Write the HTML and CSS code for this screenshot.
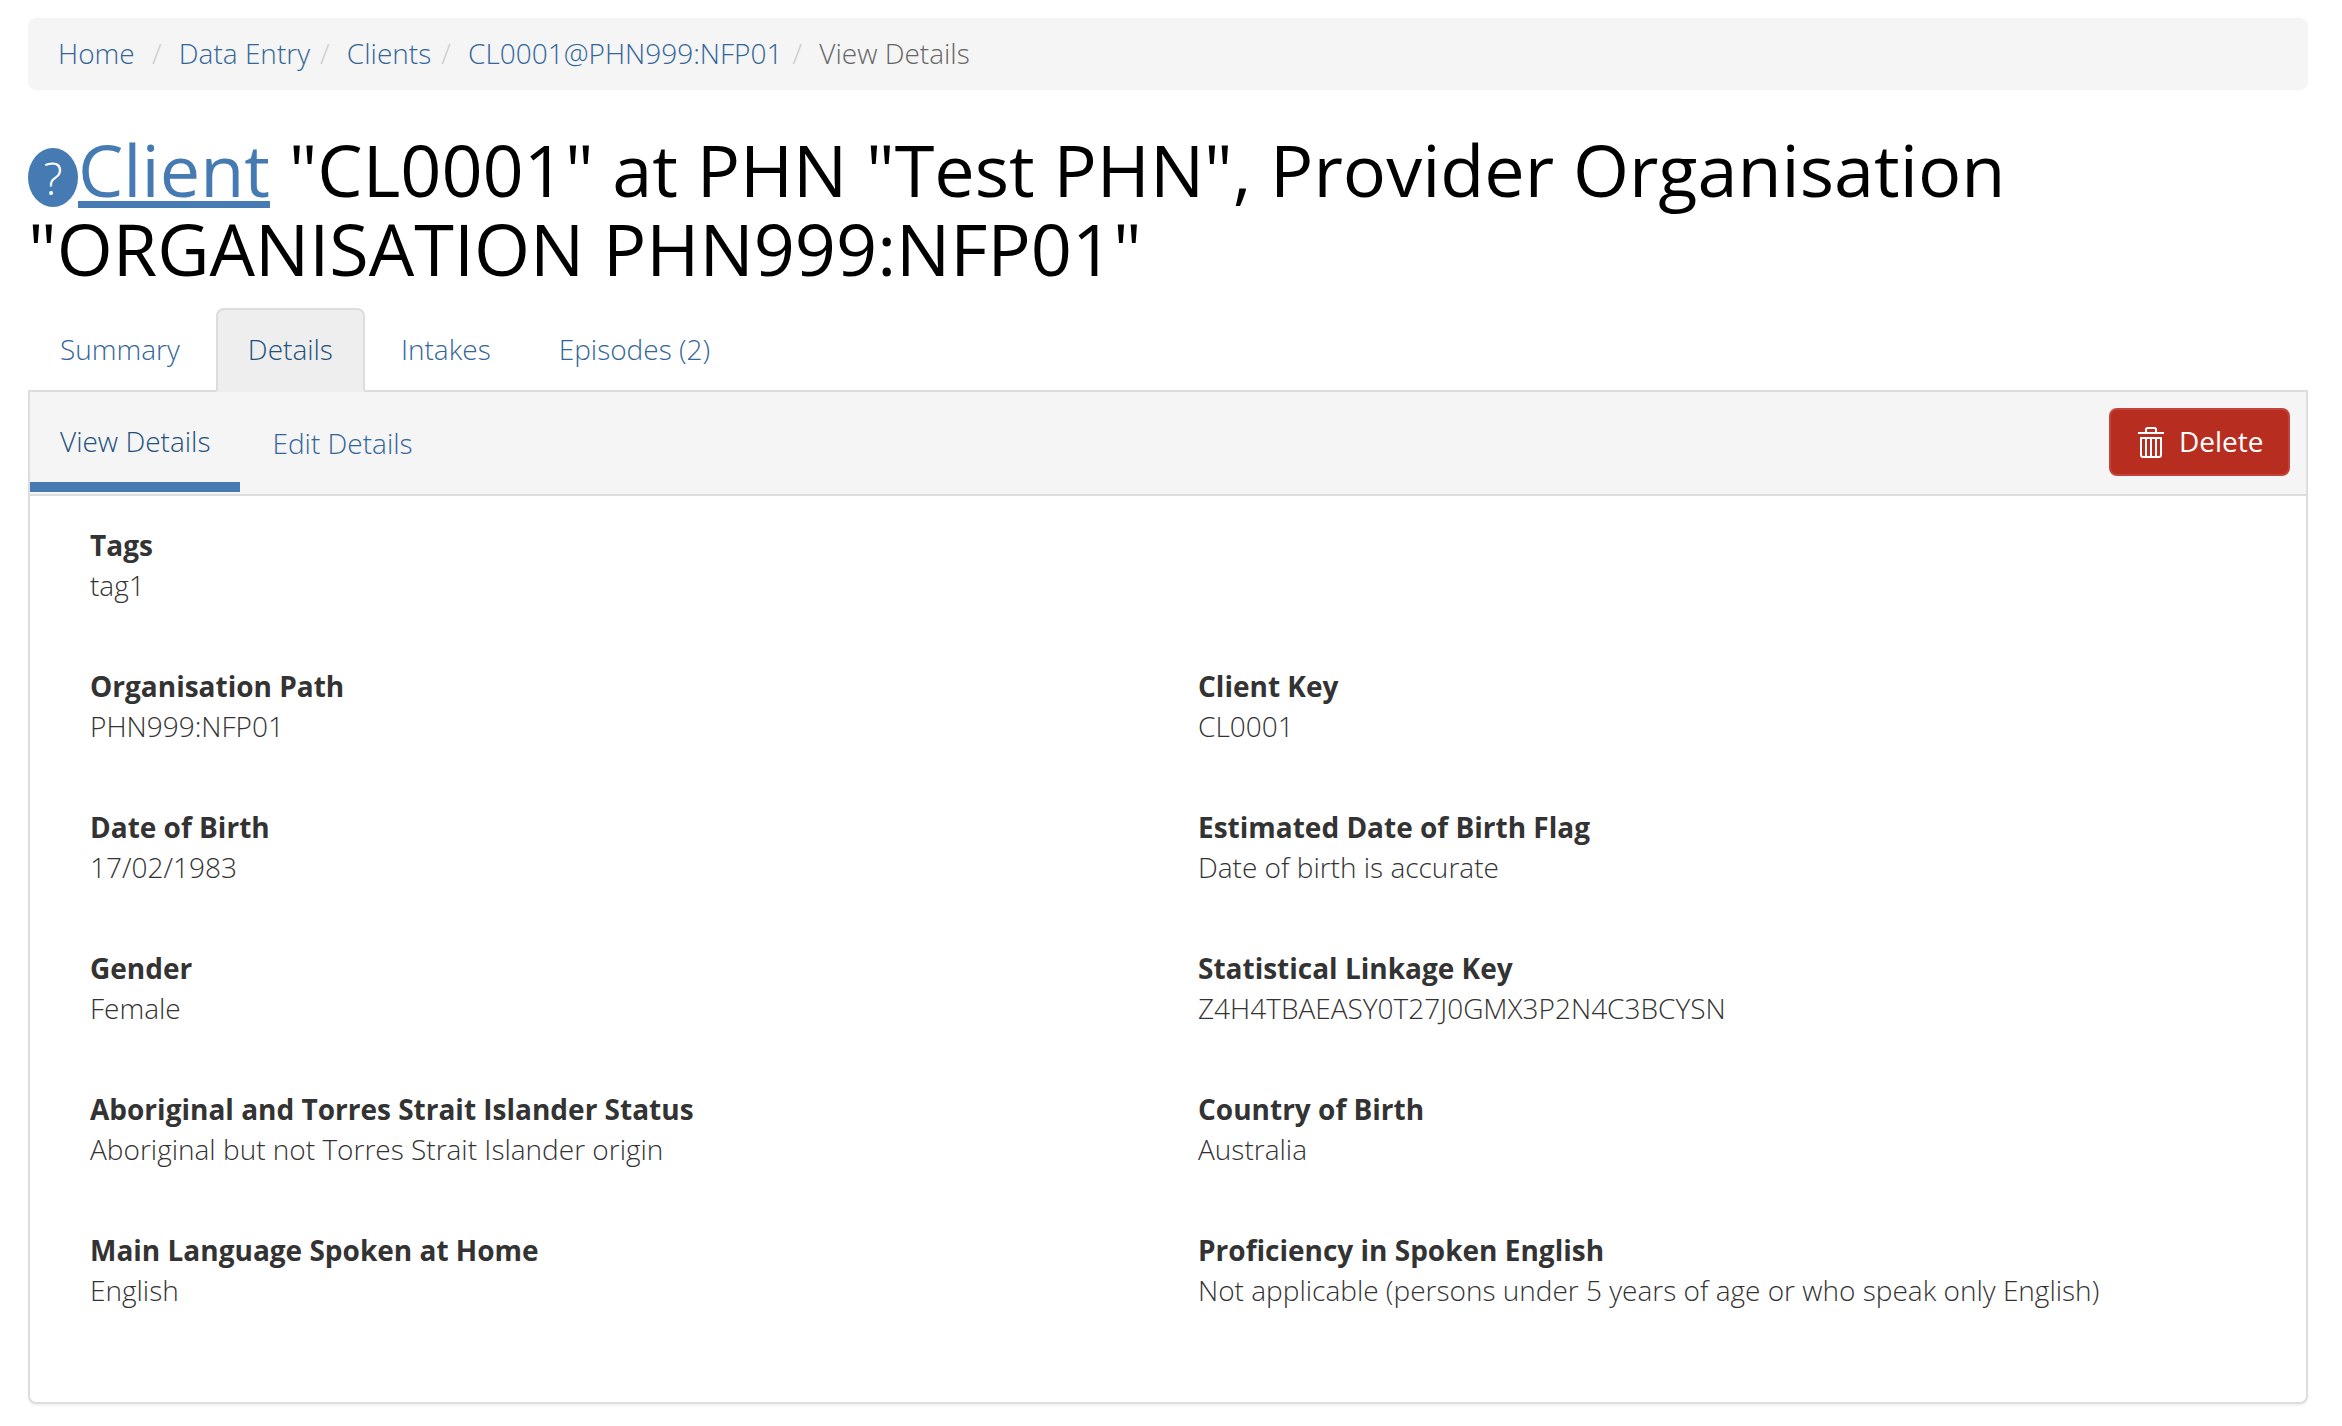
FILE: index.html
```html
<!DOCTYPE html>
<html lang="en">
<head>
<meta charset="utf-8">
<title>View Details</title>
<link rel="stylesheet" href="styles.css">
</head>
<body>
<ol class="breadcrumb">
  <li class="first"><a href="#">Home</a></li>
  <li><a href="#">Data Entry</a></li>
  <li><a href="#">Clients</a></li>
  <li><a href="#">CL0001@PHN999:NFP01</a></li>
  <li>View Details</li>
</ol>
<h1><span class="help">?</span><a href="#">Client</a> "CL0001" at PHN "Test PHN", Provider Organisation "ORGANISATION PHN999:NFP01"</h1>
<nav class="tabs">
  <a href="#">Summary</a>
  <a href="#" class="active">Details</a>
  <a href="#">Intakes</a>
  <a href="#">Episodes (2)</a>
</nav>
<main class="panel">
  <div class="panel-bar">
    <nav class="pills">
      <a href="#" class="active">View Details</a>
      <a href="#">Edit Details</a>
    </nav>
    <button class="delete" type="button">
      <svg class="trash" width="26" height="31" viewBox="0 0 26 31" fill="none" stroke="#fff" stroke-width="2">
        <path d="M0 6H26M8 5V2.500Q8 1 9.500 1H16.500Q18 1 18 2.500V5M3 11H23V28Q23 30 21 30H5Q3 30 3 28Z"/>
        <path d="M8 12V29M13 12V29M18 12V29"/>
      </svg>
      <span>Delete</span>
    </button>
  </div>
  <dl class="fields">
    <div class="wide"><dt>Tags</dt><dd>tag1</dd></div>
    <div><dt>Organisation Path</dt><dd>PHN999:NFP01</dd></div>
    <div><dt>Client Key</dt><dd>CL0001</dd></div>
    <div><dt>Date of Birth</dt><dd>17/02/1983</dd></div>
    <div><dt>Estimated Date of Birth Flag</dt><dd>Date of birth is accurate</dd></div>
    <div><dt>Gender</dt><dd>Female</dd></div>
    <div><dt>Statistical Linkage Key</dt><dd>Z4H4TBAEASY0T27J0GMX3P2N4C3BCYSN</dd></div>
    <div><dt>Aboriginal and Torres Strait Islander Status</dt><dd>Aboriginal but not Torres Strait Islander origin</dd></div>
    <div><dt>Country of Birth</dt><dd>Australia</dd></div>
    <div><dt>Main Language Spoken at Home</dt><dd>English</dd></div>
    <div><dt>Proficiency in Spoken English</dt><dd>Not applicable (persons under 5 years of age or who speak only English)</dd></div>
  </dl>
</main>
</body>
</html>
```
FILE: styles.css
```css
* { box-sizing: border-box; }
body {
  margin: 0;
  padding: 18px 34px 22px 28px;
  background: #fff;
  color: #333;
  font: 300 28px/40px "Open Sans", sans-serif;
}
a { color: #336699; text-decoration: none; }
.breadcrumb {
  display: flex;
  height: 72px;
  margin: 0;
  padding: 15px 30px;
  list-style: none;
  background: #f5f5f5;
  border-radius: 8px;
  color: #666;
}
.breadcrumb li + li::before {
  content: "/";
  padding: 0 17.3px 0 10px;
  color: #ccc;
}
.breadcrumb .first { margin-right: 7.3px; }
h1 {
  height: 158px;
  margin: 40px 0 20px;
  color: #000;
  font-size: 72px;
  font-weight: 400;
  line-height: 79px;
}
h1 a {
  color: #457ab2;
  text-decoration: underline;
  text-decoration-thickness: 7px;
  text-underline-offset: 4px;
  text-decoration-skip-ink: none;
}
.help {
  display: inline-block;
  width: 50px;
  height: 59px;
  border-radius: 50%;
  background: #457ab2;
  color: #fff;
  font-size: 45px;
  font-weight: 300;
  line-height: 59px;
  text-align: center;
  vertical-align: 2px;
}
.tabs { display: flex; gap: 4px; position: relative; z-index: 1; margin-bottom: -2px; }
.tabs a {
  padding: 19px 30px 21px;
  border: 2px solid transparent;
  border-radius: 8px 8px 0 0;
}
.tabs .active {
  border-color: #ddd;
  border-bottom-color: #eee;
  background: #eee;
  color: #23527c;
}
.panel {
  height: 1014px;
  border: 2px solid #ddd;
  border-radius: 0 0 8px 8px;
  box-shadow: 0 2px 2px rgba(0, 0, 0, .05);
}
.panel-bar {
  display: flex;
  align-items: center;
  justify-content: space-between;
  height: 104px;
  padding: 0 16px 2px 0;
  border-bottom: 2px solid #ddd;
  background: #f5f5f5;
}
.pills { display: flex; align-self: flex-start; gap: 2px; }
.pills a { height: 100px; padding: 31px 30px 0; }
.pills .active { padding-top: 29px; border-bottom: 10px solid #457ab2; color: #23527c; }
.delete {
  display: flex;
  align-items: center;
  width: 181px;
  height: 68px;
  padding: 0 0 0 27px;
  gap: 15px;
  border: 2px solid #c2433b;
  border-radius: 8px;
  background: #b72e20;
  color: #fff;
  font: 400 28px/40px "Open Sans", sans-serif;
}
.trash { margin-top: 1px; }
.delete span { margin-top: -2px; }
.fields {
  display: grid;
  grid-template-columns: 1108px 1fr;
  grid-auto-rows: 141px;
  margin: 0;
  padding: 29px 0 0 60px;
}
.wide { grid-column: 1 / -1; }
dt { font-weight: 700; }
dd { margin: 0; }
```
